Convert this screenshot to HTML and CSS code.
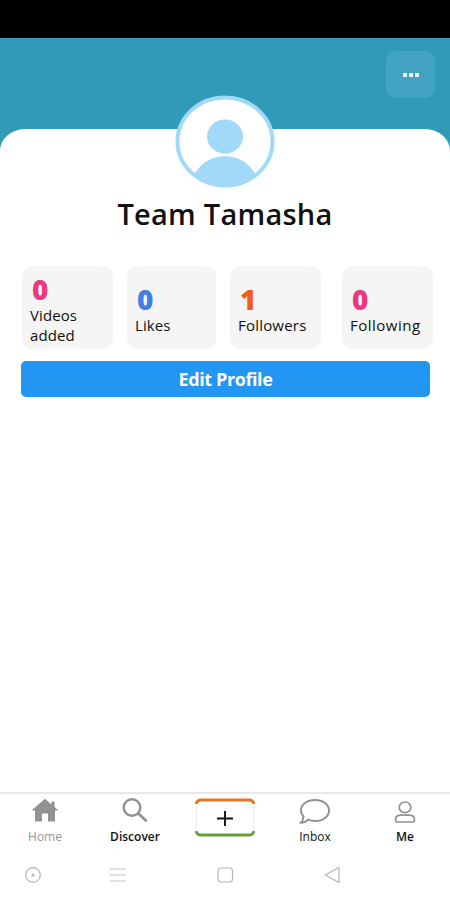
FILE: index.html
```html
<!DOCTYPE html>
<html lang="en">
<head>
<meta charset="utf-8">
<title>Profile</title>
<link rel="stylesheet" href="styles.css">
</head>
<body>
<div class="status"></div>
<header class="cover">
  <button class="more" aria-label="More"><i></i><i></i><i></i></button>
</header>
<main class="sheet">
  <svg class="avatar" viewBox="0 0 100 93">
    <defs><clipPath id="disc"><ellipse cx="50" cy="46.5" rx="49" ry="45.5"/></clipPath></defs>
    <ellipse cx="50" cy="46.5" rx="48" ry="44.5" fill="#fff"/>
    <g fill="#a1daf8" clip-path="url(#disc)">
      <ellipse cx="50" cy="41.5" rx="18" ry="17"/>
      <ellipse cx="50" cy="94" rx="34" ry="33"/>
    </g>
    <ellipse cx="50" cy="46.5" rx="47.5" ry="44" fill="none" stroke="#a1daf8" stroke-width="4"/>
  </svg>
  <h1 class="name">Team Tamasha</h1>
  <section class="stats">
    <div class="stat"><b class="num pink">0</b><span class="label">Videos<br>added</span></div>
    <div class="stat"><b class="num blue">0</b><span class="label">Likes</span></div>
    <div class="stat"><b class="num orange">1</b><span class="label followers">Followers</span></div>
    <div class="stat"><b class="num pink">0</b><span class="label following">Following</span></div>
  </section>
  <button class="edit">Edit Profile</button>
</main>
<nav class="tabs">
  <a class="tab muted">
    <svg width="30" height="28" viewBox="0 0 30 28"><path d="M15 .8 1.500 12.500h3.500V23.500h7v-8h6v8h7V12.500h3.500L24.500 9V3.500h-3V6.500Z" fill="#929292"/></svg>
    <span>Home</span>
  </a>
  <a class="tab strong">
    <svg width="30" height="28" viewBox="0 0 30 28" fill="none" stroke="#929292"><circle cx="12" cy="9.500" r="8.300" stroke-width="2.400"/><path d="m18 15.300 8.700 8" stroke-width="2.800"/></svg>
    <span>Discover</span>
  </a>
  <a class="tab add">
    <svg width="60" height="39" viewBox="0 0 60 39" fill="none">
      <path d="M1.500 8v23M58.500 8v23" stroke="#ededed"/>
      <path d="M1 6Q2 2 6 2h48q4 0 5 4" stroke="#df7626" stroke-width="2.800"/>
      <path d="M1 33q1 4 5 4h48q4 0 5-4" stroke="#64a032" stroke-width="2.800"/>
      <path d="M22 20.500h16M30 13v15" stroke="#111" stroke-width="1.900"/>
    </svg>
  </a>
  <a class="tab">
    <svg width="32" height="28" viewBox="0 0 32 28"><path d="M16 2c8 0 14 4.600 14 10.500S24 23 16 23c-2.500 0-5-.5-7-1.400C7 23.800 4.500 24.800 2 24.800c1.400-1.500 2.200-3.700 2.500-6.300C2.700 16.700 1.900 14.600 1.900 12.500 1.900 6.600 8 2 16 2Z" fill="none" stroke="#929292" stroke-width="2"/></svg>
    <span>Inbox</span>
  </a>
  <a class="tab me">
    <svg width="24" height="28" viewBox="0 0 24 28" fill="none" stroke="#929292" stroke-width="1.700"><ellipse cx="12" cy="9.300" rx="5.800" ry="5.300"/><path d="M8 17.200h8c4 0 5.500 2 5.500 4.500 0 1.600-.6 2.300-1.900 2.300H4.400c-1.300 0-1.900-.7-1.900-2.300 0-2.500 1.500-4.500 5.500-4.500Z"/></svg>
    <span>Me</span>
  </a>
</nav>
<footer class="system">
  <svg width="18" height="18" viewBox="0 0 18 18" fill="none" stroke="#b5b5b5" stroke-width="1.200"><circle cx="9" cy="9" r="7.300"/><circle cx="9" cy="9" r="1" fill="#999"/></svg>
  <svg width="18" height="18" viewBox="0 0 18 18" stroke="#c4c4c4" stroke-width="1.200"><path d="M1 3h16M1 9h16M1 15h16"/></svg>
  <svg width="18" height="18" viewBox="0 0 18 18" fill="none" stroke="#b5b5b5" stroke-width="1.200"><rect x="2" y="2" width="14.500" height="14" rx="3"/></svg>
  <svg width="18" height="18" viewBox="0 0 18 18" fill="none" stroke="#b5b5b5" stroke-width="1.200" stroke-linejoin="round"><path d="M16 1.500v15L2 9Z"/></svg>
</footer>
</body>
</html>
```
FILE: styles.css
```css
* { box-sizing: border-box; }
body {
  margin: 0;
  height: 900px;
  display: flex;
  flex-direction: column;
  background: #fff;
  font-family: "Open Sans", sans-serif;
  color: #111;
  overflow: hidden;
}
button { border: 0; padding: 0; font-family: inherit; }
.status { height: 38px; background: #000; }
.cover {
  height: 117px;
  padding: 13px 15px 0;
  background: #319ab9;
  display: flex;
  justify-content: flex-end;
  align-items: flex-start;
}
.more {
  width: 49px;
  height: 47px;
  border-radius: 9px;
  background: #42a4c2;
  display: flex;
  justify-content: center;
  align-items: center;
  gap: 2px;
}
.more i { width: 4px; height: 4px; border-radius: 1px; background: #fff; }
.sheet {
  flex: 1;
  margin-top: -26px;
  background: #fff;
  border-radius: 25px 25px 0 0 / 22px 22px 0 0;
  display: flex;
  flex-direction: column;
}
.avatar { width: 100px; height: 93px; margin: -34px auto 0; display: block; flex: none; }
.name {
  margin: 6px 0 0;
  height: 40px;
  line-height: 40px;
  text-align: center;
  font-size: 29px;
  font-weight: 600;
  letter-spacing: 0.25px;
  white-space: nowrap;
}
.stats {
  margin: 32px 17px 0 22px;
  display: grid;
  grid-template-columns: 91px 89px 91px 91px;
  justify-content: start;
  column-gap: 14px;
}
.stat {
  height: 83px;
  padding: 3px 0 0 8px;
  border-radius: 10px;
  background: #f5f5f5;
  display: flex;
  flex-direction: column;
  justify-content: center;
}
.stat:last-child { margin-left: 7px; margin-right: -7px; }
.num { font-size: 28px; line-height: 31px; padding-left: 2px; font-weight: 800; }
.pink { color: #e93a80; }
.blue { color: #417fe6; }
.orange { color: #f25c20; }
.label { font-size: 15px; line-height: 20px; font-weight: 500; white-space: nowrap; letter-spacing: 0.1px; }
.followers { letter-spacing: 0.2px; }
.following { letter-spacing: 0.5px; }
.edit {
  margin: 12px 20px 0 21px;
  height: 36px;
  border-radius: 5px;
  background: #2196f3;
  color: #fff;
  font-size: 18px;
  font-weight: 700;
  line-height: 37px;
  letter-spacing: -0.4px;
}
.tabs {
  height: 62px;
  border-top: 2px solid #e8e8e8;
  display: grid;
  grid-template-columns: repeat(5, 90px);
}
.tab {
  display: flex;
  flex-direction: column;
  align-items: center;
  padding-top: 4px;
  font-size: 12px;
  line-height: 17px;
  font-weight: 500;
}
.tab svg { flex: none; }
.tab span { margin-top: 2px; }
.muted { color: #969696; font-weight: 400; }
.strong { font-weight: 600; }
.me { font-weight: 600; }
.system {
  height: 46px;
  padding: 12px 0 0 24px;
  display: grid;
  grid-template-columns: 85px 107px 107px 18px;
}
```
